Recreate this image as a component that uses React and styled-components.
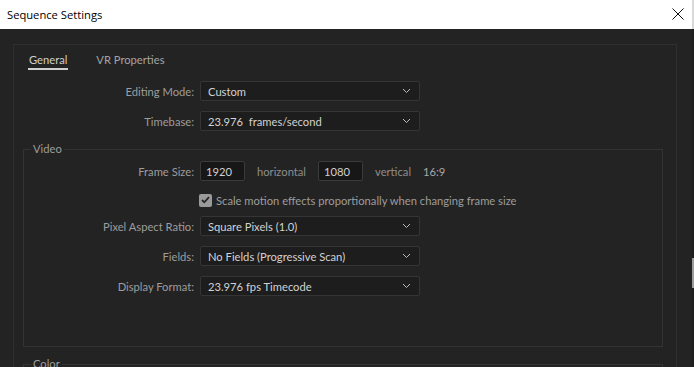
import React from 'react';
import styled, { createGlobalStyle } from 'styled-components';

const GlobalStyle = createGlobalStyle`
  html, body {
    margin: 0;
    padding: 0;
    height: 367px;
    overflow: hidden;
    background: #232323;
  }
`;

const Screen = styled.div`
  display: flex;
  width: 694px;
  height: 367px;
  overflow: hidden;
`;

const Dialog = styled.div`
  width: 692px;
  display: flex;
  flex-direction: column;
  background: #232323;
`;

const Edge = styled.div`
  width: 2px;
  display: flex;
  flex-direction: column;
  background: #1e1e1e;
`;

const EdgeTop = styled.div`
  height: 29px;
  background: #d9d9d9;
`;

const EdgeThumb = styled.div`
  margin-top: 229px;
  height: 30px;
  background: #9c9c9c;
`;

const TitleBar = styled.div`
  height: 29px;
  flex-shrink: 0;
  background: #fff;
  display: flex;
  align-items: center;
  justify-content: space-between;
  padding: 0 8px 0 7px;
  font-family: "Open Sans", sans-serif;
  font-size: 11.2px;
  color: #000;
`;

const CloseButton = styled.div`
  width: 13px;
  height: 13px;
  display: flex;
  align-items: center;
  justify-content: center;
  margin-top: -2px;
`;

const Content = styled.div`
  flex: 1;
  padding: 15px 15px 0 13px;
  font-family: Lato, sans-serif;
  font-size: 11.2px;
`;

const Panel = styled.div`
  height: 100%;
  border: 1px solid #2f2f2f;
  border-bottom: none;
  box-sizing: border-box;
`;

const Tabs = styled.div`
  display: flex;
  gap: 27px;
  padding: 7px 0 0 14px;
`;

const Tab = styled.div`
  line-height: 16px;
  padding: 0 1px;
  color: ${p => (p.$active ? '#cfcfcf' : '#a3a3a3')};
  border-bottom: 2px solid ${p => (p.$active ? '#cfcfcf' : 'transparent')};
`;

const Row = styled.div`
  display: flex;
  align-items: center;
  height: ${p => p.$h || 20}px;
  margin-top: ${p => p.$mt ?? 10}px;
`;

const Label = styled.div`
  width: ${p => p.$w}px;
  box-sizing: border-box;
  padding-right: 6px;
  text-align: right;
  color: #9d9d9d;
  white-space: nowrap;
`;

const Select = styled.div`
  width: 220px;
  height: 20px;
  box-sizing: border-box;
  display: flex;
  align-items: center;
  justify-content: space-between;
  padding: 0 8px 0 7px;
  background: #1d1d1d;
  border: 1px solid #353535;
  border-radius: 2px;
  color: #d2d2d2;
  white-space: pre;
`;

const NumberBox = styled.div`
  width: 45px;
  height: 20px;
  box-sizing: border-box;
  display: flex;
  align-items: center;
  padding-left: 5px;
  background: #171717;
  border: 1px solid #3b3b3b;
  border-radius: 2px;
  color: #d2d2d2;
`;

const UnitText = styled.span`
  margin: 0 ${p => (p.$last ? 0 : 12)}px 0 ${p => (p.$last ? 0 : 12)}px;
  color: ${p => (p.$bright ? '#a9a9a9' : '#8e8e8e')};
`;

const Group = styled.fieldset`
  margin: ${p => p.$mt}px 13px 0 9px;
  padding: 5px 0 ${p => p.$pb}px;
  border: 1px solid #333;
  border-radius: 0;
  min-width: 0;
`;

const Legend = styled.legend`
  margin-left: 7px;
  padding: 0 2px;
  line-height: 14px;
  color: #9d9d9d;
`;

const CheckLabel = styled.label`
  display: flex;
  align-items: center;
  gap: 4px;
  margin-left: 175px;
  color: #9d9d9d;
  white-space: nowrap;
`;

const CheckBox = styled.span`
  width: 13px;
  height: 13px;
  border-radius: 2px;
  background: #9a9a9a;
  display: flex;
  align-items: center;
  justify-content: center;
`;

const Chevron = () => (
  <svg width="9" height="6" viewBox="0 0 9 6">
    <path d="M1 1l3.5 3.5L8 1" fill="none" stroke="#bdbdbd" strokeWidth="1" />
  </svg>
);

const Dropdown = ({ children }) => (
  <Select>
    <span>{children}</span>
    <Chevron />
  </Select>
);

const FormRow = ({ label, w, mt, children }) => (
  <Row $mt={mt}>
    <Label $w={w}>{label}</Label>
    {children}
  </Row>
);

export default function App() {
  return (
    <>
      <GlobalStyle />
      <Screen>
        <Dialog>
          <TitleBar>
            <span>Sequence Settings</span>
            <CloseButton>
              <svg width="12" height="12" viewBox="0 0 12 12">
                <path d="M0.5 0.5l11 11M11.5 0.5l-11 11" stroke="#111" strokeWidth="1" />
              </svg>
            </CloseButton>
          </TitleBar>
          <Content>
            <Panel>
              <Tabs>
                <Tab $active>General</Tab>
                <Tab>VR Properties</Tab>
              </Tabs>
              <FormRow label="Editing Mode:" w={186} mt={11}>
                <Dropdown>Custom</Dropdown>
              </FormRow>
              <FormRow label="Timebase:" w={186}>
                <Dropdown>23.976  frames/second</Dropdown>
              </FormRow>

              <Group $mt={11} $pb={50}>
                <Legend>Video</Legend>
                <FormRow label="Frame Size:" w={176} mt={0}>
                  <NumberBox>1920</NumberBox>
                  <UnitText>horizontal</UnitText>
                  <NumberBox>1080</NumberBox>
                  <UnitText>vertical</UnitText>
                  <UnitText $bright $last>16:9</UnitText>
                </FormRow>
                <Row $h={16} $mt={11}>
                  <CheckLabel>
                    <CheckBox>
                      <svg width="9" height="8" viewBox="0 0 9 8">
                        <path d="M1 4l2.3 2.3L8 1.2" fill="none" stroke="#262626" strokeWidth="1.8" />
                      </svg>
                    </CheckBox>
                    Scale motion effects proportionally when changing frame size
                  </CheckLabel>
                </Row>
                <FormRow label="Pixel Aspect Ratio:" w={176} mt={8}>
                  <Dropdown>Square Pixels (1.0)</Dropdown>
                </FormRow>
                <FormRow label="Fields:" w={176}>
                  <Dropdown>No Fields (Progressive Scan)</Dropdown>
                </FormRow>
                <FormRow label="Display Format:" w={176}>
                  <Dropdown>23.976 fps Timecode</Dropdown>
                </FormRow>
              </Group>

              <Group $mt={10} $pb={40}>
                <Legend>Color</Legend>
              </Group>
            </Panel>
          </Content>
        </Dialog>
        <Edge>
          <EdgeTop />
          <EdgeThumb />
        </Edge>
      </Screen>
    </>
  );
}
